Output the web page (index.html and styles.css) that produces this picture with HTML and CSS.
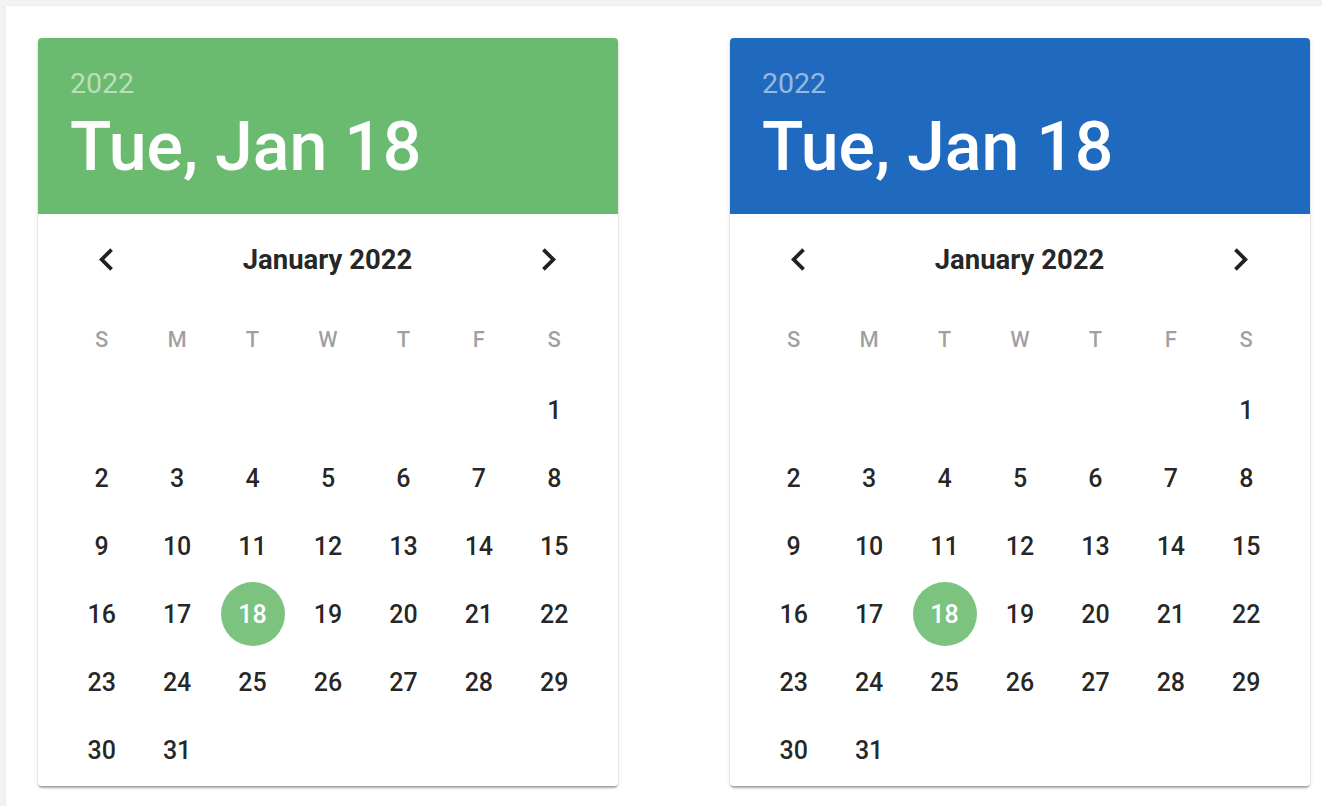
FILE: index.html
```html
<!DOCTYPE html>
<html lang="en">
<head>
    <meta charset="UTF-8">
    <meta name="viewport" content="width=device-width, initial-scale=1.0">
    <title>Date Pickers</title>
    <link rel="stylesheet" href="styles.css">
</head>
<body>
    <div class="page">
        <div class="panel">
            <div class="picker">
                <div class="picker-header green">
                    <div class="year">2022</div>
                    <div class="date">Tue, Jan 18</div>
                </div>
                <div class="month-bar">
                    <svg class="chevron" viewBox="0 0 24 24"><path d="M15.41 7.41L14 6l-6 6 6 6 1.41-1.41L10.83 12z"/></svg>
                    <div class="month-title">January 2022</div>
                    <svg class="chevron" viewBox="0 0 24 24"><path d="M10 6L8.59 7.41 13.17 12l-4.58 4.59L10 18l6-6z"/></svg>
                </div>
                <div class="weekdays">
                    <span>S</span><span>M</span><span>T</span><span>W</span><span>T</span><span>F</span><span>S</span>
                </div>
                <div class="days" id="days-1"></div>
            </div>

            <div class="picker">
                <div class="picker-header blue">
                    <div class="year">2022</div>
                    <div class="date">Tue, Jan 18</div>
                </div>
                <div class="month-bar">
                    <svg class="chevron" viewBox="0 0 24 24"><path d="M15.41 7.41L14 6l-6 6 6 6 1.41-1.41L10.83 12z"/></svg>
                    <div class="month-title">January 2022</div>
                    <svg class="chevron" viewBox="0 0 24 24"><path d="M10 6L8.59 7.41 13.17 12l-4.58 4.59L10 18l6-6z"/></svg>
                </div>
                <div class="weekdays">
                    <span>S</span><span>M</span><span>T</span><span>W</span><span>T</span><span>F</span><span>S</span>
                </div>
                <div class="days" id="days-2"></div>
            </div>
        </div>
    </div>

    <script>
        // January 2022 starts on a Saturday
        function fillDays(id) {
            const grid = document.getElementById(id);
            let html = '';
            for (let i = 0; i < 6; i++) {
                html += '<span class="day"></span>';
            }
            for (let d = 1; d <= 31; d++) {
                const cls = d === 18 ? 'day selected' : 'day';
                html += `<span class="${cls}"><span class="num">${d}</span></span>`;
            }
            grid.innerHTML = html;
        }
        fillDays('days-1');
        fillDays('days-2');
    </script>
</body>
</html>
```

FILE: styles.css
```css
html, body {
    margin: 0;
    padding: 0;
    height: 100%;
    overflow: hidden;
}
body {
    font-family: Roboto, "Liberation Sans", Arial, sans-serif;
    background-color: #f3f3f3;
}
.page {
    padding: 6px 0 0 6px;
    height: 100%;
    box-sizing: border-box;
}
.panel {
    background: #fff;
    height: 100%;
    box-sizing: border-box;
    padding: 32px;
    display: flex;
    gap: 112px;
    box-shadow: 0 0 2px rgba(0, 0, 0, 0.08);
}
.picker {
    width: 580px;
    height: 748px;
    flex-shrink: 0;
    background: #fff;
    border-radius: 4px;
    overflow: hidden;
    box-shadow: 0 3px 2px -1px rgba(0, 0, 0, 0.25), 0 1px 2px rgba(0, 0, 0, 0.14), 0 1px 5px rgba(0, 0, 0, 0.1);
}
.picker-header {
    height: 176px;
    box-sizing: border-box;
    padding: 30px 32px 0;
    color: #fff;
}
.picker-header.green {
    background-color: #6abb6f;
}
.picker-header.blue {
    background-color: #1f69bf;
}
.year {
    font-size: 28.5px;
    line-height: 32px;
    color: rgba(255, 255, 255, 0.54);
}
.date {
    font-size: 68px;
    font-weight: 500;
    line-height: 80px;
    margin-top: 7px;
}
.month-bar {
    height: 90px;
    display: flex;
    align-items: center;
    justify-content: space-between;
    padding: 0 47px 0 46px;
}
.chevron {
    width: 45px;
    height: 45px;
    fill: rgba(0, 0, 0, 0.87);
}
.month-title {
    font-size: 27.5px;
    font-weight: 700;
    color: rgba(0, 0, 0, 0.87);
}
.weekdays {
    height: 71px;
    display: grid;
    grid-template-columns: repeat(7, 1fr);
    align-items: center;
    padding: 0 26px;
    font-size: 22px;
    font-weight: 500;
    color: rgba(0, 0, 0, 0.38);
    text-align: center;
}
.days {
    display: grid;
    grid-template-columns: repeat(7, 1fr);
    grid-auto-rows: 68px;
    padding: 1px 26px 0;
}
.day {
    display: flex;
    align-items: center;
    justify-content: center;
    font-size: 25px;
    font-weight: 500;
    color: rgba(0, 0, 0, 0.87);
}
.day .num {
    width: 64px;
    height: 64px;
    border-radius: 50%;
    display: flex;
    align-items: center;
    justify-content: center;
}
.day.selected .num {
    background-color: #7cc380;
    color: #fff;
}
```
